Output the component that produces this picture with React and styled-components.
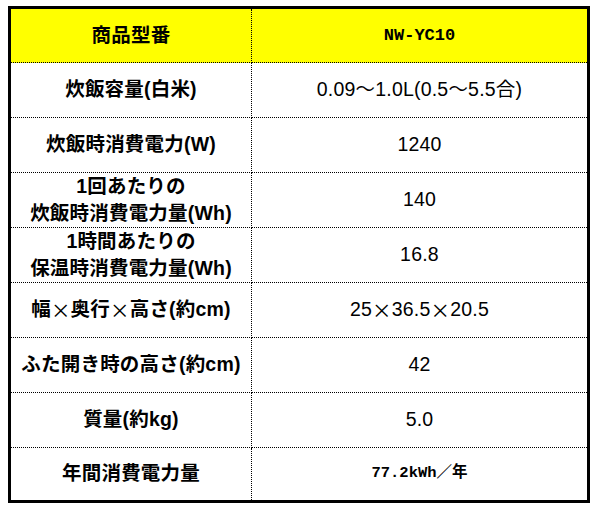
import React from 'react';
import styled, { createGlobalStyle } from 'styled-components';

const GlobalStyle = createGlobalStyle`
  html, body {
    margin: 0;
    padding: 0;
    background: #ffffff;
  }
  body {
    font-family: "Liberation Sans", "Noto Sans CJK JP", sans-serif;
    color: #000000;
  }
`;

const Page = styled.div`
  padding: 6px 0 0 8px;
`;

const SpecTable = styled.div`
  width: 576px;
  border: 3px solid #000000;
  display: grid;
  grid-template-columns: 241px 1fr;
  grid-template-rows: 54px repeat(7, 55px) 52px;
`;

const Cell = styled.div`
  display: flex;
  align-items: center;
  justify-content: center;
  text-align: center;
  background: ${p => (p.$head ? '#ffff00' : '#ffffff')};
  border-bottom: ${p => (p.$last ? 'none' : '1px dotted #000000')};
  border-right: ${p => (p.$label ? '1px dotted #000000' : 'none')};
  font-size: 19.5px;
  line-height: 27px;
  font-weight: ${p => (p.$label || p.$head ? 700 : 400)};
  letter-spacing: 0.2px;
  white-space: pre-line;
  padding-bottom: ${p => (p.$head ? 0 : 1)}px;
`;

const Mono = styled.span`
  font-family: "Liberation Mono", "Noto Sans CJK JP", monospace;
  font-size: ${p => p.$size || 17}px;
  font-weight: ${p => p.$weight || 700};
  letter-spacing: 0;
`;

const Wide = styled.span`
  font-family: "Noto Sans CJK JP", sans-serif;
  font-feature-settings: "fwid";
  font-weight: 400;
`;

const withWideTimes = text =>
  text.split('×').flatMap((part, i) =>
    i === 0 ? [part] : [<Wide key={i}>×</Wide>, part]
  );

const rows = [
  ['炊飯容量(白米)', '0.09～1.0L(0.5～5.5合)'],
  ['炊飯時消費電力(W)', '1240'],
  ['1回あたりの\n炊飯時消費電力量(Wh)', '140'],
  ['1時間あたりの\n保温時消費電力量(Wh)', '16.8'],
  ['幅×奥行×高さ(約cm)', '25×36.5×20.5'],
  ['ふた開き時の高さ(約cm)', '42'],
  ['質量(約kg)', '5.0'],
];

export default function App() {
  return (
    <Page>
      <GlobalStyle />
      <SpecTable>
        <Cell $head $label>商品型番</Cell>
        <Cell $head>
          <Mono>NW-YC10</Mono>
        </Cell>
        {rows.map(([label, value]) => (
          <React.Fragment key={label}>
            <Cell $label>{withWideTimes(label)}</Cell>
            <Cell>{withWideTimes(value)}</Cell>
          </React.Fragment>
        ))}
        <Cell $label $last>年間消費電力量</Cell>
        <Cell $last>
          <Mono $size={15.5} $weight={700}>77.2kWh／年</Mono>
        </Cell>
      </SpecTable>
    </Page>
  );
}
